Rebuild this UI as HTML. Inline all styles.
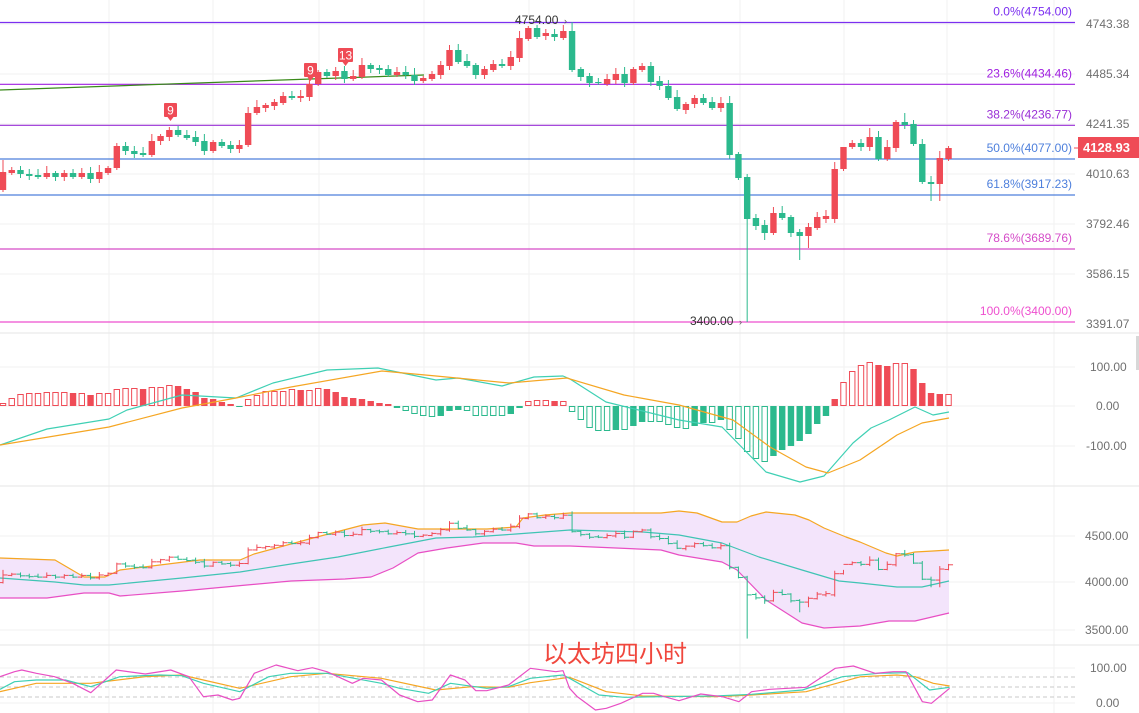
<!DOCTYPE html>
<html><head><meta charset="utf-8"><style>
html,body{margin:0;padding:0;background:#fff;width:1139px;height:713px;overflow:hidden}
svg{display:block}
text{font-family:"Liberation Sans","Noto Sans CJK SC",sans-serif}
</style></head><body>
<svg id="s" width="1139" height="713" viewBox="0 0 1139 713" xmlns="http://www.w3.org/2000/svg">
<g id="grid" stroke="#f2f2f2" stroke-width="1"></g>
<g id="fibs"></g>
<polygon id="bfill" fill="#f3e4fb" stroke="none"/>
<g id="main"></g>
<g id="macd"></g>
<g id="boll"></g>
<g id="kdj"></g>
<g font-size="12" fill="#707070">
<text x="1086" y="28">4743.38</text>
<text x="1086" y="78">4485.34</text>
<text x="1086" y="128">4241.35</text>
<text x="1086" y="178">4010.63</text>
<text x="1086" y="228">3792.46</text>
<text x="1086" y="278">3586.15</text>
<text x="1086" y="328">3391.07</text>
<text x="1090" y="371">100.00</text>
<text x="1096" y="410">0.00</text>
<text x="1086" y="450">-100.00</text>
<text x="1085" y="540">4500.00</text>
<text x="1085" y="586">4000.00</text>
<text x="1085" y="634">3500.00</text>
<text x="1090" y="672">100.00</text>
<text x="1096" y="707">0.00</text>
</g>
<rect x="1078" y="137" width="61" height="21" fill="#ef4b56"/>
<line x1="1074" y1="148" x2="1079" y2="148" stroke="#ef4b56"/>
<text x="1083" y="152" font-size="13" font-weight="bold" fill="#fff">4128.93</text>
<rect x="1136" y="336" width="3" height="34" fill="#d8d8d8"/>
<text x="515" y="24" font-size="12" fill="#333">4754.00</text>
<text x="564" y="24" font-size="9" fill="#555">›</text>
<text x="690" y="325" font-size="12" fill="#333">3400.00</text>
<text x="739" y="325" font-size="9" fill="#555">›</text>
<text x="543" y="662" font-size="24" fill="#f0473d" font-family="Liberation Sans,'Noto Sans CJK SC',sans-serif">以太坊四小时</text>
</svg>
<script>
var NS="http://www.w3.org/2000/svg";
function el(p,t,a){var e=document.createElementNS(NS,t);for(var k in a)e.setAttribute(k,a[k]);document.getElementById(p).appendChild(e);return e;}
var R="#ef4b56",G="#2bb98d";
[109,213,319,424,529,634,740,844,947,1054].forEach(function(x){el("grid","line",{x1:x,y1:0,x2:x,y2:713});});
[24,74,124,174,224,274,367,406,446,536,582,630,668,703].forEach(function(y){el("grid","line",{x1:0,y1:y,x2:1075,y2:y});});
[333,486,645].forEach(function(y){el("grid","line",{x1:0,y1:y,x2:1139,y2:y,stroke:"#e6e6e6"});});
var fibs=[[22.5,"#7b2ff0","0.0%(4754.00)"],[84.3,"#a020e0","23.6%(4434.46)"],[125.3,"#9a2fd6","38.2%(4236.77)"],[159,"#4d7fdc","50.0%(4077.00)"],[195,"#4d7fdc","61.8%(3917.23)"],[249,"#d54cc8","78.6%(3689.76)"],[322,"#ee4fcf","100.0%(3400.00)"]];
fibs.forEach(function(f){el("fibs","line",{x1:0,y1:f[0],x2:1075,y2:f[0],stroke:f[1],"stroke-width":1.2});
var t=el("fibs","text",{x:1072,y:f[0]-7,"text-anchor":"end","font-size":12,fill:f[1]});t.textContent=f[2];});
el("fibs","line",{x1:0,y1:90,x2:424,y2:75,stroke:"#3a8a1a","stroke-width":1.3});
var OC=[[190,172],[173,170],[170,174],[174,176],[175,177],[177,173],[173,177],[177,173],[173,177],[177,173],[173,179],[179,172],[173,168],[168,146],[146,151],[151,154],[153,155],[155,141],[141,136],[137,130],[130,135],[135,138],[137,142],[141,151],[151,142],[142,146],[145,149],[149,145],[145,113],[113,107],[108,105],[106,102],[103,96],[96,98],[98,96],[97,84],[84,72],[72,76],[76,71],[71,79],[79,76],[77,65],[65,69],[68,70],[69,75],[75,72],[72,75],[75,81],[81,78],[79,74],[75,65],[66,50],[50,62],[61,66],[65,75],[75,69],[70,64],[64,66],[66,57],[58,38],[39,28],[28,37],[36,33],[34,37],[38,31],[31,70],[69,77],[76,83],[82,83],[84,79],[80,74],[74,83],[83,69],[70,66],[66,82],[81,86],[86,98],[97,109],[110,104],[104,98],[98,103],[102,108],[108,103],[103,155],[154,178],[177,219],[218,226],[225,233],[233,213],[213,218],[217,233],[232,236],[236,227],[228,217],[219,216],[219,169],[169,147],[147,143],[143,147],[147,137],[137,159],[159,147],[148,122],[122,125],[124,144],[144,182],[182,184],[184,158],[159,148]];
var N=OC.length,H=[],L=[];
for(var i=0;i<N;i++){var o=OC[i][0],c=OC[i][1];H[i]=Math.min(o,c)-2-(i*7%6);L[i]=Math.max(o,c)+2-(i*3%2)+(i*5%4);}
H[65]=22;L[85]=322;L[91]=260;L[106]=201;L[107]=201;H[0]=160;H[103]=113;H[99]=128;H[96]=160;L[87]=240;L[92]=248;
function X(i){return 3+i*8.755;}
for(var i=0;i<N;i++){var o=OC[i][0],c=OC[i][1],col=c<o?R:G,x=X(i);
el("main","line",{x1:x,y1:H[i],x2:x,y2:L[i],stroke:col,"stroke-width":1});
el("main","rect",{x:x-3.2,y:Math.min(o,c),width:6.4,height:Math.max(1,Math.abs(o-c)),fill:col});}
function badge(x,y,t,w){el("main","rect",{x:x,y:y,width:w,height:14,fill:R,rx:1});el("main","polygon",{points:(x+w/2-3)+","+(y+14)+" "+(x+w/2+3)+","+(y+14)+" "+(x+w/2)+","+(y+18),fill:R});
var e=el("main","text",{x:x+w/2,y:y+11.5,"text-anchor":"middle","font-size":12,fill:"#fff"});e.textContent=t;}
badge(164,103,"9",13);badge(304,63,"9",13);badge(338,48,"13",15);
var hv=[3,8,12,13,13,14,14,14,13,13,11,13,13,17,18,18,17,19,19,21,20,17,14,8,7,4,2,-1,7,11,15,15,15,17,16,16,18,17,14,9,8,7,5,3,2,
-2,-5,-8,-10,-11,-10,-5,-4,-5,-10,-10,-10,-10,-8,-2,5,6,6,5,5,
-6,-14,-22,-25,-25,-24,-24,-20,-16,-16,-16,-19,-22,-23,-20,-17,-17,-14,-24,-33,-46,-53,-56,-50,-44,-40,-35,-28,-18,-10,7,24,35,41,44,41,40,43,43,37,23,13,12,12];
for(var i=0;i<N&&i<hv.length;i++){var v=hv[i],x=X(i),prev=i?Math.abs(hv[i-1]):0,grow=Math.abs(v)>=prev,col=v>=0?R:G;
var y=v>=0?406-v:406,h=Math.max(1,Math.abs(v));
if(grow)el("macd","rect",{x:x-2.7,y:y+0.5,width:5.4,height:Math.max(0.5,h-1),fill:"#fff",stroke:col,"stroke-width":1});
else el("macd","rect",{x:x-3.2,y:y,width:6.4,height:h,fill:col});}
function pl(g,pts,col,w){el(g,"polyline",{points:pts.map(function(p){return p.join(",")}).join(" "),fill:"none",stroke:col,"stroke-width":w||1.2,"stroke-linejoin":"round"});}
pl("macd",[[0,445],[47,429],[109,419],[127,410],[182,395],[218,397],[236,398],[273,383],[327,370],[378,368],[436,380],[458,378],[502,386],[534,377],[563,376],[570,379],[606,402],[679,420],[722,427],[766,472],[800,482],[824,476],[853,443],[871,428],[889,420],[915,407],[933,415],[949,412]],"#3fd0b4");
pl("macd",[[0,445],[109,427],[182,408],[236,398],[291,387],[382,371],[436,376],[509,383],[567,378],[570,379],[624,395],[679,405],[733,420],[770,447],[806,467],[828,473],[860,460],[897,435],[922,423],[949,418]],"#f5a623");
var up=[[0,558],[55,560],[84,577],[105,577],[120,570],[200,560],[240,560],[254,554],[313,538],[363,525],[385,523],[418,529],[487,529],[516,527],[523,518],[545,515],[570,513],[661,513],[679,511],[697,513],[722,522],[737,522],[751,516],[766,512],[795,515],[809,520],[824,528],[846,537],[860,542],[886,553],[897,556],[915,552],[933,551],[949,550]];
var mid=[[0,578],[55,582],[84,585],[109,585],[182,578],[240,572],[291,564],[338,557],[389,547],[436,538],[473,537],[516,534],[570,530],[643,532],[679,535],[722,543],[759,557],[802,570],[839,581],[860,583],[897,587],[922,587],[949,581]];
var lo=[[0,598],[47,598],[84,593],[109,593],[120,596],[182,591],[236,586],[291,581],[345,579],[371,577],[393,568],[418,553],[447,548],[483,543],[516,543],[534,546],[570,546],[661,550],[679,555],[722,562],[737,570],[766,600],[802,623],[824,628],[860,626],[889,621],[915,621],[949,613]];
document.getElementById("bfill").setAttribute("points",up.concat(lo.slice().reverse()).map(function(p){return p.join(",")}).join(" "));
pl("boll",up,"#f5a623");pl("boll",mid,"#3fc4b4");pl("boll",lo,"#e84fc4");
function by(y){var p=4754-(y-22.5)/0.2212;return 582.3-(p-4000)*0.0938;}
for(var i=0;i<N;i++){var o=OC[i][0],c=OC[i][1],col=c<o?R:G,x=X(i);
el("boll","line",{x1:x,y1:by(H[i]),x2:x,y2:by(L[i]),stroke:col,"stroke-width":1});
el("boll","line",{x1:x-4,y1:by(o),x2:x,y2:by(o),stroke:col,"stroke-width":1});
el("boll","line",{x1:x,y1:by(c),x2:x+4.5,y2:by(c),stroke:col,"stroke-width":1});}
[677,687,697].forEach(function(y){el("kdj","line",{x1:0,y1:y,x2:1075,y2:y,stroke:"#c8c8c8","stroke-dasharray":"4,3"});});
function kz(a,b){return a.map(function(p){return [b+p[0]/2.753,330+p[1]/3];});}
var J=kz([[0,1040],[40,1025],[60,1020],[100,1030],[150,1040],[200,1060],[250,1088],[320,1020],[400,1032],[470,1020],[520,1040],[560,1100],[600,1095],[640,1110],[660,1105],[700,1030],[760,1005],[820,1022],[860,1013],[900,1025],[940,1045],[970,1060],[1000,1045],[1050,1050],[1100,1095],[1150,1115],[1190,1110],[1240,1035],[1280,1050],[1310,1082],[1340,1082],[1400,1065],[1460,1015],[1530,1025],[1550,1022],[1568,1075]],0).concat(kz([[20,1100],[70,1140],[100,1135],[140,1120],[200,1090],[230,1090],[260,1100],[300,1112],[360,1092],[420,1100],[465,1115],[500,1085],[550,1078],[600,1075],[650,1072],[730,1015],[780,1008],[840,1030],[890,1025],[925,1025],[970,1115],[995,1120],[1045,1075]],570));
var K=kz([[0,1078],[40,1055],[100,1050],[180,1050],[250,1070],[330,1040],[440,1035],[500,1037],[560,1060],[660,1085],[740,1040],[800,1030],[900,1030],[960,1042],[1050,1060],[1100,1075],[1180,1090],[1240,1060],[1340,1075],[1400,1070],[1460,1045],[1550,1035],[1568,1045]],0).concat(kz([[80,1095],[150,1102],[250,1100],[400,1098],[500,1093],[640,1080],[750,1040],[850,1030],[930,1028],[990,1080],[1045,1072]],570));
var D=kz([[0,1085],[100,1060],[250,1060],[400,1040],[500,1035],[560,1050],[660,1075],[800,1040],[900,1030],[1050,1045],[1200,1080],[1300,1070],[1400,1072],[1460,1058],[1568,1042]],0).concat(kz([[100,1085],[200,1098],[400,1100],[500,1095],[650,1085],[800,1040],[900,1035],[950,1040],[1000,1060],[1045,1068]],570));
pl("kdj",D,"#f5a623");pl("kdj",K,"#3fd0b4");pl("kdj",J,"#e84fc4");
</script>
</body></html>
